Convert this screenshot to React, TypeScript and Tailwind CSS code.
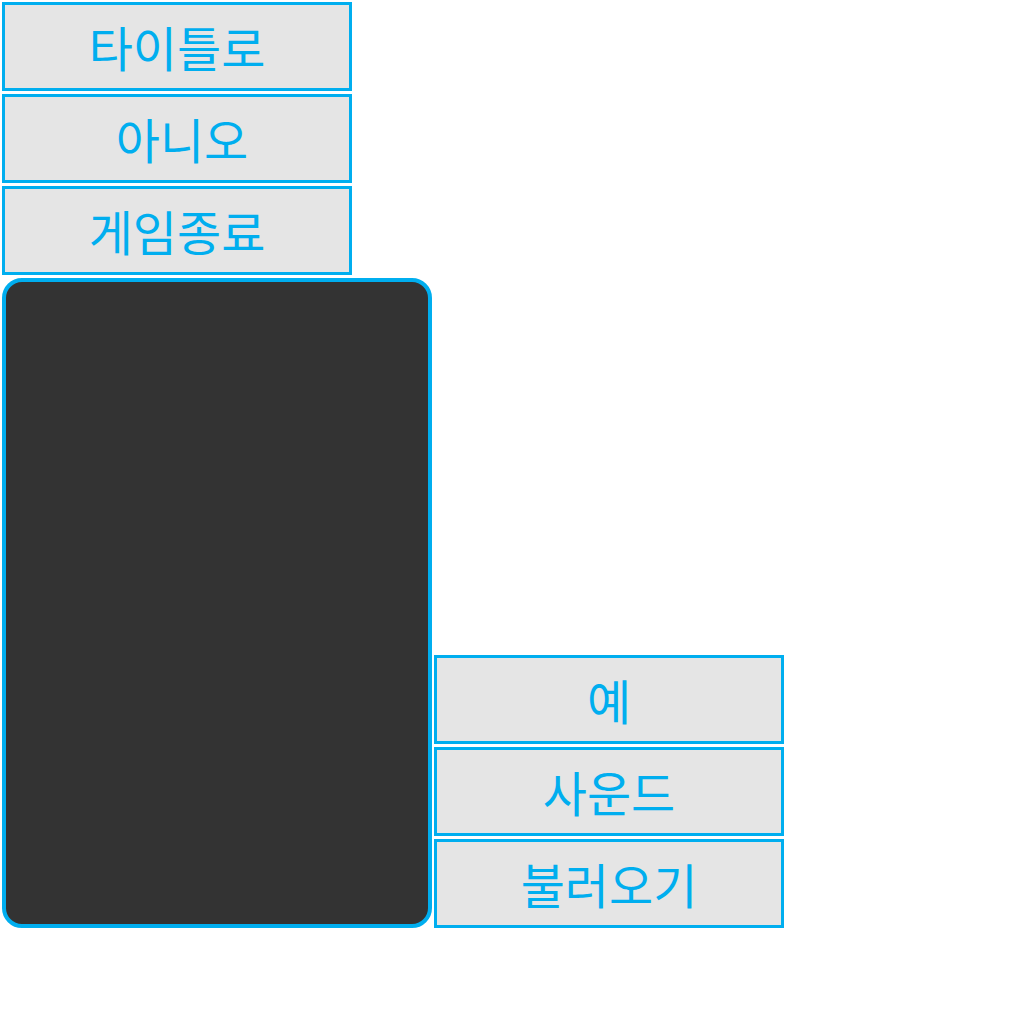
const labels = { left: ['타이틀로', '아니오', '게임종료'], right: ['예', '사운드', '불러오기'] };

function MenuButton({ label, shift }: { label: string; shift?: boolean }) {
  return (
    <div
      className={
        shift
          ? 'flex h-[89px] w-[350px] items-center justify-center border-[3px] border-solid border-[#00aeef] bg-[#e5e5e5] pb-[2px] pl-[10px] text-[48px] leading-none text-[#00aeef]'
          : 'flex h-[89px] w-[350px] items-center justify-center border-[3px] border-solid border-[#00aeef] bg-[#e5e5e5] pb-[2px] text-[48px] leading-none text-[#00aeef]'
      }
    >
      {label}
    </div>
  );
}

export default function App() {
  return (
    <div
      className="flex h-[1024px] w-[1024px] flex-col gap-[3px] bg-white p-[2px]"
      style={{ fontFamily: '"Noto Sans CJK KR", "Noto Sans", sans-serif' }}
    >
      <div className="flex flex-col gap-[3px]">
        {labels.left.map((l) => (
          <MenuButton key={l} label={l} shift={l === '아니오'} />
        ))}
      </div>
      <div className="flex items-end gap-[2px]">
        <div className="h-[650px] w-[430px] rounded-[20px] border-4 border-solid border-[#00aeef] bg-[#333333]" />
        <div className="flex flex-col gap-[3px]">
          {labels.right.map((l) => (
            <MenuButton key={l} label={l} />
          ))}
        </div>
      </div>
    </div>
  );
}
